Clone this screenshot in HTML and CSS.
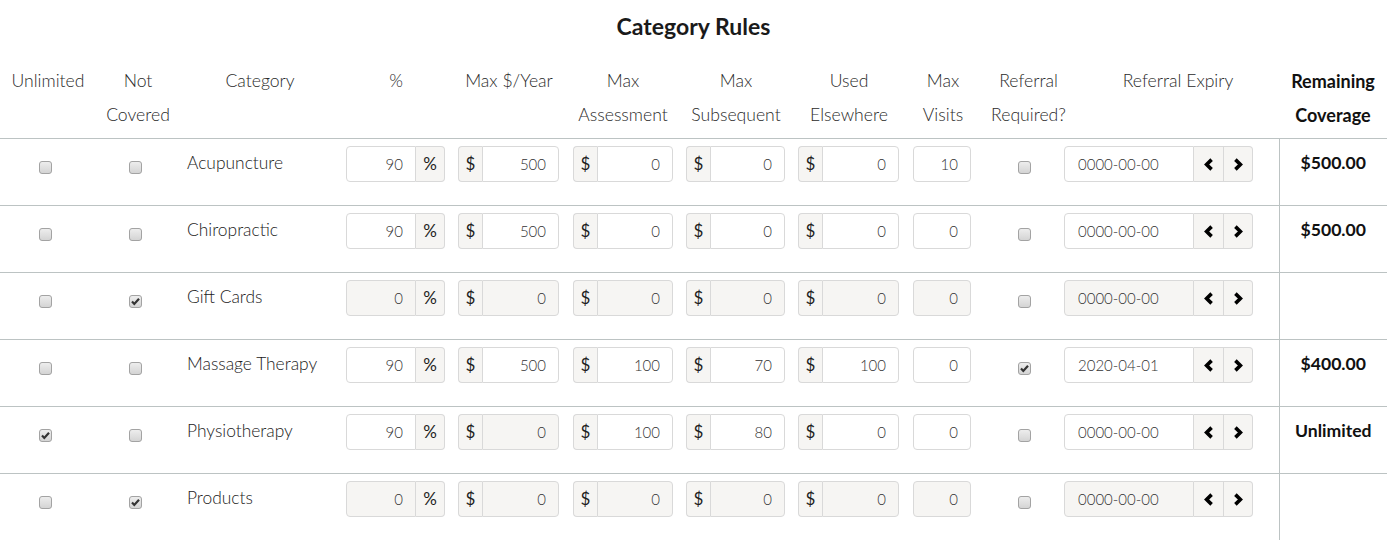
FILE: index.html
```html
<!DOCTYPE html>
<html lang="en">
<head>
<meta charset="utf-8">
<title>Category Rules</title>
<link rel="stylesheet" href="styles.css">
</head>
<body>
<div class="page">
  <h3 class="title">Category Rules</h3>
  <table class="rules">
    <colgroup>
      <col class="w90"><col class="w90"><col class="w160"><col class="w112"><col class="w114"><col class="w114"><col class="w112"><col class="w114"><col class="w74"><col class="w77"><col class="w222"><col class="w108">
    </colgroup>
    <thead>
      <tr>
        <th class="shift"><div>Unlimited</div></th>
        <th class="shift"><div>Not<br>Covered</div></th>
        <th><div>Category</div></th>
        <th><div>%</div></th>
        <th><div>Max $/Year</div></th>
        <th><div>Max<br>Assessment</div></th>
        <th><div>Max<br>Subsequent</div></th>
        <th><div>Used<br>Elsewhere</div></th>
        <th><div>Max<br>Visits</div></th>
        <th class="wide-r"><div>Referral<br>Required?</div></th>
        <th class="wide-l"><div>Referral Expiry</div></th>
        <th class="strong"><div>Remaining<br>Coverage</div></th>
      </tr>
    </thead>
    <tbody>
      <tr>
        <td class="chk"><span class="cb"></span></td>
        <td class="chk"><span class="cb"></span></td>
        <td class="cat">Acupuncture</td>
        <td><div class="ig"><input class="in in-l" type="text" value="90"><span class="ad ad-r">%</span></div></td>
        <td><div class="ig"><span class="ad ad-l">$</span><input class="in in-r" type="text" value="500"></div></td>
        <td class="p7"><div class="ig"><span class="ad ad-l">$</span><input class="in in-r" type="text" value="0"></div></td>
        <td><div class="ig"><span class="ad ad-l">$</span><input class="in in-r" type="text" value="0"></div></td>
        <td><div class="ig"><span class="ad ad-l">$</span><input class="in in-r" type="text" value="0"></div></td>
        <td class="visits"><div class="ig"><input class="in in-a" type="text" value="10"></div></td>
        <td class="chk ref"><span class="cb"></span></td>
        <td class="p7"><div class="ig date"><input class="in in-l dt" type="text" value="0000-00-00"><span class="btn"><svg viewBox="0 0 12 15" class="chev"><polyline points="8.6,2.6 3.6,7.5 8.6,12.4"/></svg></span><span class="btn btn-r"><svg viewBox="0 0 12 15" class="chev"><polyline points="3.4,2.6 8.4,7.5 3.4,12.4"/></svg></span></div></td>
        <td class="rem">$500.00</td>
      </tr>
      <tr>
        <td class="chk"><span class="cb"></span></td>
        <td class="chk"><span class="cb"></span></td>
        <td class="cat">Chiropractic</td>
        <td><div class="ig"><input class="in in-l" type="text" value="90"><span class="ad ad-r">%</span></div></td>
        <td><div class="ig"><span class="ad ad-l">$</span><input class="in in-r" type="text" value="500"></div></td>
        <td class="p7"><div class="ig"><span class="ad ad-l">$</span><input class="in in-r" type="text" value="0"></div></td>
        <td><div class="ig"><span class="ad ad-l">$</span><input class="in in-r" type="text" value="0"></div></td>
        <td><div class="ig"><span class="ad ad-l">$</span><input class="in in-r" type="text" value="0"></div></td>
        <td class="visits"><div class="ig"><input class="in in-a" type="text" value="0"></div></td>
        <td class="chk ref"><span class="cb"></span></td>
        <td class="p7"><div class="ig date"><input class="in in-l dt" type="text" value="0000-00-00"><span class="btn"><svg viewBox="0 0 12 15" class="chev"><polyline points="8.6,2.6 3.6,7.5 8.6,12.4"/></svg></span><span class="btn btn-r"><svg viewBox="0 0 12 15" class="chev"><polyline points="3.4,2.6 8.4,7.5 3.4,12.4"/></svg></span></div></td>
        <td class="rem">$500.00</td>
      </tr>
      <tr>
        <td class="chk"><span class="cb"></span></td>
        <td class="chk"><span class="cb on"><svg viewBox="0 0 11 11" class="tick"><polyline points="2,5.6 4.3,8 9,2.8"/></svg></span></td>
        <td class="cat">Gift Cards</td>
        <td><div class="ig"><input class="in in-l" type="text" value="0" disabled><span class="ad ad-r">%</span></div></td>
        <td><div class="ig"><span class="ad ad-l">$</span><input class="in in-r" type="text" value="0" disabled></div></td>
        <td class="p7"><div class="ig"><span class="ad ad-l">$</span><input class="in in-r" type="text" value="0" disabled></div></td>
        <td><div class="ig"><span class="ad ad-l">$</span><input class="in in-r" type="text" value="0" disabled></div></td>
        <td><div class="ig"><span class="ad ad-l">$</span><input class="in in-r" type="text" value="0" disabled></div></td>
        <td class="visits"><div class="ig"><input class="in in-a" type="text" value="0" disabled></div></td>
        <td class="chk ref"><span class="cb"></span></td>
        <td class="p7"><div class="ig date"><input class="in in-l dt" type="text" value="0000-00-00" disabled><span class="btn"><svg viewBox="0 0 12 15" class="chev"><polyline points="8.6,2.6 3.6,7.5 8.6,12.4"/></svg></span><span class="btn btn-r"><svg viewBox="0 0 12 15" class="chev"><polyline points="3.4,2.6 8.4,7.5 3.4,12.4"/></svg></span></div></td>
        <td class="rem"></td>
      </tr>
      <tr>
        <td class="chk"><span class="cb"></span></td>
        <td class="chk"><span class="cb"></span></td>
        <td class="cat">Massage Therapy</td>
        <td><div class="ig"><input class="in in-l" type="text" value="90"><span class="ad ad-r">%</span></div></td>
        <td><div class="ig"><span class="ad ad-l">$</span><input class="in in-r" type="text" value="500"></div></td>
        <td class="p7"><div class="ig"><span class="ad ad-l">$</span><input class="in in-r" type="text" value="100"></div></td>
        <td><div class="ig"><span class="ad ad-l">$</span><input class="in in-r" type="text" value="70"></div></td>
        <td><div class="ig"><span class="ad ad-l">$</span><input class="in in-r" type="text" value="100"></div></td>
        <td class="visits"><div class="ig"><input class="in in-a" type="text" value="0"></div></td>
        <td class="chk ref"><span class="cb on"><svg viewBox="0 0 11 11" class="tick"><polyline points="2,5.6 4.3,8 9,2.8"/></svg></span></td>
        <td class="p7"><div class="ig date"><input class="in in-l dt" type="text" value="2020-04-01"><span class="btn"><svg viewBox="0 0 12 15" class="chev"><polyline points="8.6,2.6 3.6,7.5 8.6,12.4"/></svg></span><span class="btn btn-r"><svg viewBox="0 0 12 15" class="chev"><polyline points="3.4,2.6 8.4,7.5 3.4,12.4"/></svg></span></div></td>
        <td class="rem">$400.00</td>
      </tr>
      <tr>
        <td class="chk"><span class="cb on"><svg viewBox="0 0 11 11" class="tick"><polyline points="2,5.6 4.3,8 9,2.8"/></svg></span></td>
        <td class="chk"><span class="cb"></span></td>
        <td class="cat">Physiotherapy</td>
        <td><div class="ig"><input class="in in-l" type="text" value="90"><span class="ad ad-r">%</span></div></td>
        <td><div class="ig"><span class="ad ad-l">$</span><input class="in in-r" type="text" value="0" disabled></div></td>
        <td class="p7"><div class="ig"><span class="ad ad-l">$</span><input class="in in-r" type="text" value="100"></div></td>
        <td><div class="ig"><span class="ad ad-l">$</span><input class="in in-r" type="text" value="80"></div></td>
        <td><div class="ig"><span class="ad ad-l">$</span><input class="in in-r" type="text" value="0"></div></td>
        <td class="visits"><div class="ig"><input class="in in-a" type="text" value="0"></div></td>
        <td class="chk ref"><span class="cb"></span></td>
        <td class="p7"><div class="ig date"><input class="in in-l dt" type="text" value="0000-00-00"><span class="btn"><svg viewBox="0 0 12 15" class="chev"><polyline points="8.6,2.6 3.6,7.5 8.6,12.4"/></svg></span><span class="btn btn-r"><svg viewBox="0 0 12 15" class="chev"><polyline points="3.4,2.6 8.4,7.5 3.4,12.4"/></svg></span></div></td>
        <td class="rem">Unlimited</td>
      </tr>
      <tr>
        <td class="chk"><span class="cb"></span></td>
        <td class="chk"><span class="cb on"><svg viewBox="0 0 11 11" class="tick"><polyline points="2,5.6 4.3,8 9,2.8"/></svg></span></td>
        <td class="cat">Products</td>
        <td><div class="ig"><input class="in in-l" type="text" value="0" disabled><span class="ad ad-r">%</span></div></td>
        <td><div class="ig"><span class="ad ad-l">$</span><input class="in in-r" type="text" value="0" disabled></div></td>
        <td class="p7"><div class="ig"><span class="ad ad-l">$</span><input class="in in-r" type="text" value="0" disabled></div></td>
        <td><div class="ig"><span class="ad ad-l">$</span><input class="in in-r" type="text" value="0" disabled></div></td>
        <td><div class="ig"><span class="ad ad-l">$</span><input class="in in-r" type="text" value="0" disabled></div></td>
        <td class="visits"><div class="ig"><input class="in in-a" type="text" value="0" disabled></div></td>
        <td class="chk ref"><span class="cb"></span></td>
        <td class="p7"><div class="ig date"><input class="in in-l dt" type="text" value="0000-00-00" disabled><span class="btn"><svg viewBox="0 0 12 15" class="chev"><polyline points="8.6,2.6 3.6,7.5 8.6,12.4"/></svg></span><span class="btn btn-r"><svg viewBox="0 0 12 15" class="chev"><polyline points="3.4,2.6 8.4,7.5 3.4,12.4"/></svg></span></div></td>
        <td class="rem"></td>
      </tr>
    </tbody>
  </table>
</div>
</body>
</html>
```

FILE: styles.css
```css
html, body {
  margin: 0;
  padding: 0;
  background: #fff;
}

body {
  font-family: Lato, "Open Sans", "Liberation Sans", sans-serif;
  color: #333;
}

.page {
  width: 1387px;
}

.title {
  margin: 0 0 15px;
  padding-top: 13px;
  font-size: 23px;
  line-height: 26px;
  font-weight: 700;
  text-align: center;
  color: #1a1a1a;
}

.rules {
  width: 1387px;
  table-layout: fixed;
  border-collapse: collapse;
  border-spacing: 0;
}

.w90 { width: 90px; }
.w160 { width: 160px; }
.w112 { width: 112px; }
.w114 { width: 114px; }
.w74 { width: 74px; }
.w77 { width: 77px; }
.w222 { width: 222px; }
.w108 { width: 108px; }

.rules th {
  padding: 10px 0 6px;
  font-size: 17.6px;
  line-height: 34px;
  font-weight: 300;
  color: #2a2a2a;
  text-align: center;
  vertical-align: top;
  white-space: nowrap;
  border-bottom: 1px solid #bcc3c3;
}

.rules th.shift div { padding-left: 6px; }
.rules th.wide-r div { margin-right: -20px; }
.rules th.wide-l div { margin-left: 20px; }
.rules th.strong { font-weight: 700; font-size: 18px; color: #111; }

.rules td {
  padding: 7px 7px 23px 6px;
  vertical-align: top;
  font-size: 17.4px;
  line-height: 34px;
  font-weight: 300;
  color: #222;
  border-bottom: 1px solid #bcc3c3;
}

.rules tbody tr:last-child td { border-bottom: none; }

.rules td.p7 { padding-left: 7px; }
.rules td.cat { padding-left: 7px; white-space: nowrap; }
.rules td.visits { padding-left: 7px; padding-right: 9px; }

.rules td.chk {
  padding-left: 0;
  padding-right: 0;
  text-align: center;
}
.rules td.chk.ref { padding-left: 11px; }

.cb {
  display: inline-block;
  box-sizing: border-box;
  width: 13px;
  height: 13px;
  margin-top: 15px;
  vertical-align: top;
  border: 1px solid #a3a3a3;
  border-radius: 3px;
  background: linear-gradient(#ededed, #d4d4d4);
  position: relative;
}

.tick {
  position: absolute;
  left: 0;
  top: 0;
  width: 11px;
  height: 11px;
  fill: none;
  stroke: #333;
  stroke-width: 2.2;
}

.rules td.rem {
  padding-left: 0;
  padding-right: 0;
  text-align: center;
  font-size: 17.6px;
  font-weight: 700;
  color: #111;
  border-left: 1px solid #bcc3c3;
}

.ig {
  display: flex;
  height: 36px;
}

.in {
  flex: 1 1 auto;
  min-width: 0;
  width: 10px;
  height: 36px;
  box-sizing: border-box;
  margin: 0;
  padding: 0 12px;
  border: 1px solid #d9d9d9;
  background: #fff;
  font-family: Lato, "Open Sans", sans-serif;
  font-size: 15px;
  font-weight: 300;
  color: #333;
  text-align: right;
  outline: none;
}

.in:disabled {
  background: #f6f5f3;
  color: #333;
  -webkit-text-fill-color: #333;
  opacity: 1;
}

.in-l { border-radius: 4px 0 0 4px; }
.in-r { border-radius: 0 4px 4px 0; }
.in-a { border-radius: 4px; }

.ad {
  flex: none;
  width: 24px;
  box-sizing: border-box;
  display: flex;
  align-items: center;
  justify-content: center;
  border: 1px solid #d9d9d9;
  background: #f6f5f3;
  font-size: 17px;
  font-weight: 400;
  color: #1e1e1e;
}

.ad-l {
  border-right: none;
  border-radius: 4px 0 0 4px;
}

.ad-r {
  width: 29px;
  border-left: none;
  border-radius: 0 4px 4px 0;
}

.date {
  width: 189px;
}

.dt {
  flex: none;
  width: 130px;
  text-align: left;
  padding-left: 13px;
}

.btn {
  flex: none;
  width: 30px;
  box-sizing: border-box;
  display: flex;
  align-items: center;
  justify-content: center;
  border: 1px solid #d9d9d9;
  border-left: none;
  background: #f6f5f3;
}

.btn-r {
  width: 29px;
  border-radius: 0 4px 4px 0;
}

.chev {
  width: 12px;
  height: 15px;
  fill: none;
  stroke: #000;
  stroke-width: 3.6;
  stroke-linecap: butt;
  stroke-linejoin: miter;
}
```
